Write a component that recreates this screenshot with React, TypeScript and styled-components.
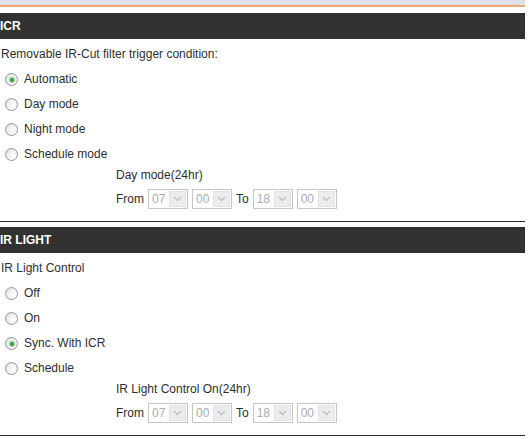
import React from "react";
import styled, { createGlobalStyle } from "styled-components";

const GlobalStyle = createGlobalStyle`
  html, body {
    margin: 0;
    padding: 0;
    background: #ffffff;
  }
  body {
    font-family: "Liberation Sans", Arial, sans-serif;
    font-size: 12px;
    color: #2e2e2e;
  }
`;

const Page = styled.div`
  width: 525px;
  display: flex;
  flex-direction: column;
`;

const TopStrip = styled.div`
  height: 5px;
  background: #dee1e5;
  border-bottom: 2px solid #f2a670;
  margin-bottom: 6px;
`;

const Section = styled.section`
  display: flex;
  flex-direction: column;
`;

const SectionHeader = styled.div`
  height: 26px;
  line-height: 26px;
  background: #323232;
  color: #ffffff;
  font-weight: bold;
  font-size: 12px;
  padding-left: 0;
  white-space: nowrap;
`;

const Body = styled.div`
  display: flex;
  flex-direction: column;
  padding: 2px 0 10px 0;
`;

const Label = styled.div`
  height: 26px;
  line-height: 26px;
  padding-left: 1px;
`;

const RadioRow = styled.label`
  height: 25px;
  display: flex;
  align-items: center;
  gap: 6px;
  padding-left: 5px;
  line-height: 25px;
`;

const RadioDot = styled.span<{ $checked?: boolean }>`
  width: 13px;
  height: 13px;
  box-sizing: border-box;
  border-radius: 50%;
  border: 1px solid #8d99a4;
  background: radial-gradient(circle at 65% 65%, #ffffff 0%, #f4f4f4 40%, #d6d8da 100%);
  display: flex;
  align-items: center;
  justify-content: center;
  flex: none;

  &::after {
    content: "";
    display: ${(p) => (p.$checked ? "block" : "none")};
    width: 4px;
    height: 4px;
    border-radius: 50%;
    background: #3aa53a;
    box-shadow: 0 0 0 1px #9fd79f;
  }
`;

const SubBlock = styled.div`
  display: flex;
  flex-direction: column;
  padding-left: 116px;
`;

const SubLabel = styled.div`
  height: 20px;
  line-height: 17px;
`;

const TimeRow = styled.div`
  height: 24px;
  display: flex;
  align-items: center;
  gap: 4px;
`;

const Word = styled.span`
  line-height: 24px;
`;

const SelectBox = styled.div`
  width: 40px;
  height: 20px;
  box-sizing: border-box;
  border: 1px solid #c6c6c6;
  background: #ffffff;
  display: flex;
  align-items: center;
`;

const SelectValue = styled.span`
  flex: 1;
  padding-left: 3px;
  color: #acacac;
  font-size: 12px;
`;

const SelectArrow = styled.span`
  width: 17px;
  height: 16px;
  margin-right: 1px;
  box-sizing: border-box;
  background: #ececec;
  border: 1px solid #e2e2e2;
  display: flex;
  align-items: center;
  justify-content: center;
`;

const Divider = styled.div`
  height: 1px;
  background: #2a2a2a;
  margin-bottom: 5px;
`;

const Select: React.FC<{ value: string }> = ({ value }) => (
  <SelectBox>
    <SelectValue>{value}</SelectValue>
    <SelectArrow>
      <svg width="9" height="6" viewBox="0 0 9 6">
        <path d="M1 1 L4.5 4.5 L8 1" fill="none" stroke="#b9c1ca" strokeWidth="1.4" />
      </svg>
    </SelectArrow>
  </SelectBox>
);

type Opt = { label: string; checked?: boolean };

const Block: React.FC<{
  title: string;
  label: string;
  options: Opt[];
  sub: string;
}> = ({ title, label, options, sub }) => (
  <Section>
    <SectionHeader>{title}</SectionHeader>
    <Body>
      <Label>{label}</Label>
      {options.map((o) => (
        <RadioRow key={o.label}>
          <RadioDot $checked={o.checked} />
          <span>{o.label}</span>
        </RadioRow>
      ))}
      <SubBlock>
        <SubLabel>{sub}</SubLabel>
        <TimeRow>
          <Word>From</Word>
          <Select value="07" />
          <Select value="00" />
          <Word>To</Word>
          <Select value="18" />
          <Select value="00" />
        </TimeRow>
      </SubBlock>
    </Body>
    <Divider />
  </Section>
);

export default function App() {
  return (
    <>
      <GlobalStyle />
      <Page>
        <TopStrip />
        <Block
          title="ICR"
          label="Removable IR-Cut filter trigger condition:"
          options={[
            { label: "Automatic", checked: true },
            { label: "Day mode" },
            { label: "Night mode" },
            { label: "Schedule mode" },
          ]}
          sub="Day mode(24hr)"
        />
        <Block
          title="IR LIGHT"
          label="IR Light Control"
          options={[
            { label: "Off" },
            { label: "On" },
            { label: "Sync. With ICR", checked: true },
            { label: "Schedule" },
          ]}
          sub="IR Light Control On(24hr)"
        />
      </Page>
    </>
  );
}
